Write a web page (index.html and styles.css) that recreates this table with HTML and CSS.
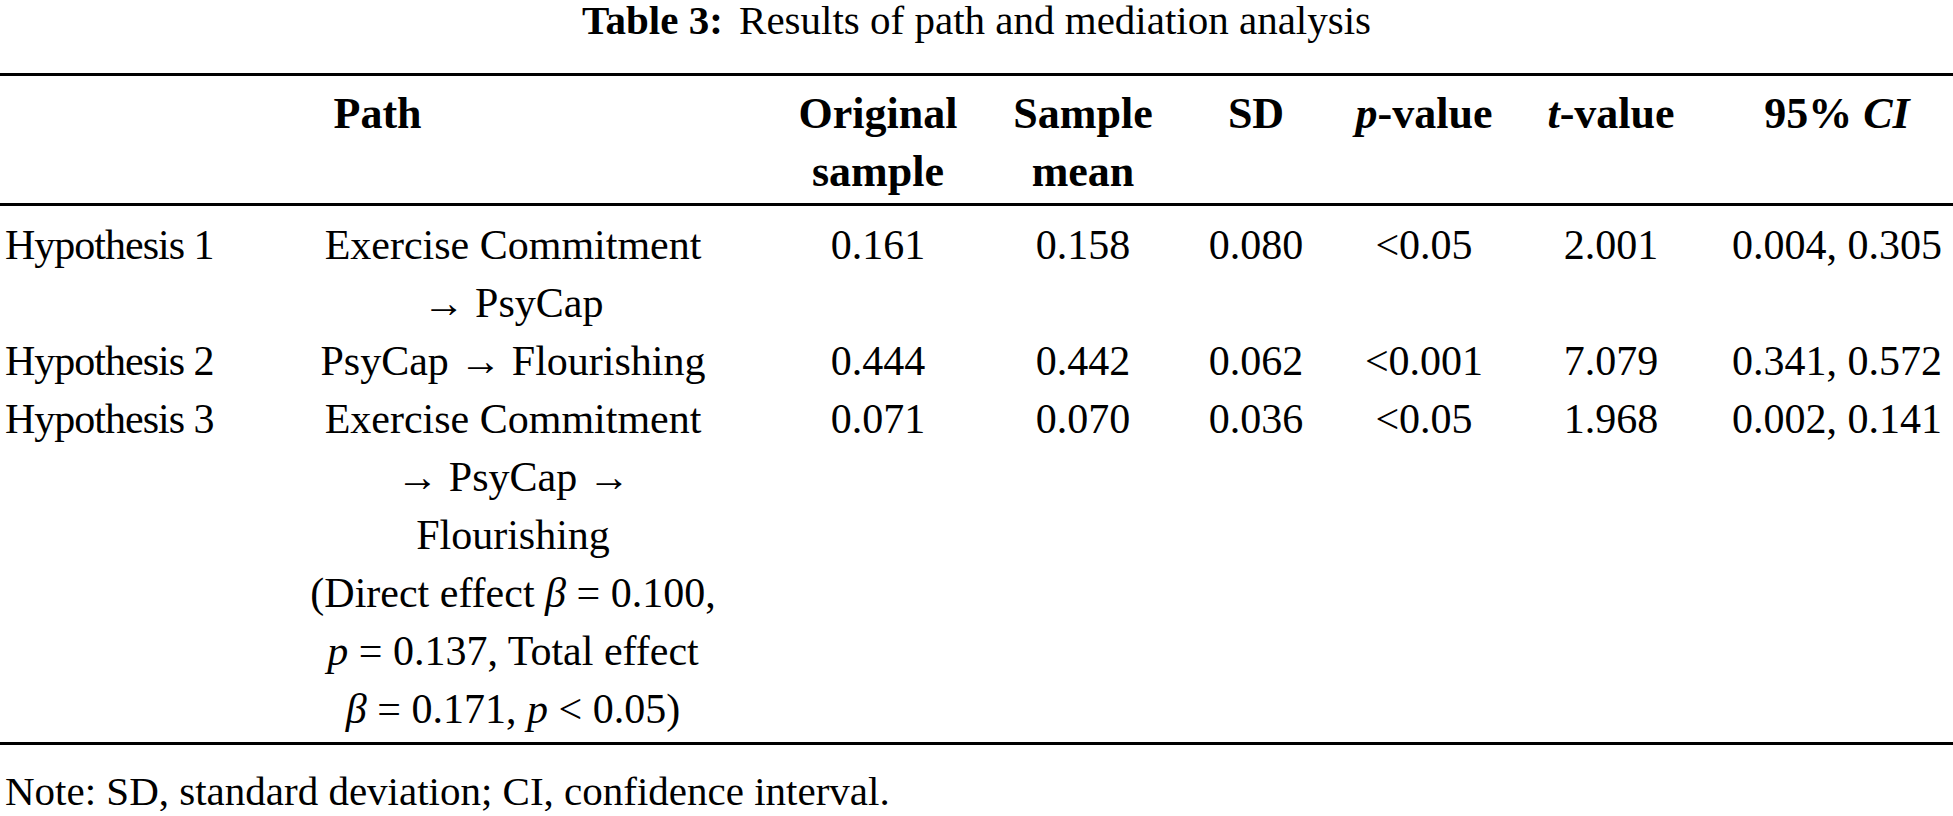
FILE: index.html
```html
<!DOCTYPE html>
<html lang="en">
<head>
<meta charset="utf-8">
<title>Table 3: Results of path and mediation analysis</title>
<link rel="stylesheet" href="styles.css">
</head>
<body>
<div class="doc">
  <p class="caption"><b class="label">Table 3:</b> Results of path and mediation analysis</p>
  <table class="results">
    <colgroup>
      <col class="c-hyp"><col class="c-path"><col class="c-orig"><col class="c-mean"><col class="c-sd"><col class="c-p"><col class="c-t"><col class="c-ci">
    </colgroup>
    <thead>
      <tr>
        <th colspan="2">Path</th>
        <th>Original<br>sample</th>
        <th>Sample<br>mean</th>
        <th>SD</th>
        <th><i>p</i>-value</th>
        <th><i>t</i>-value</th>
        <th>95% <i>CI</i></th>
      </tr>
    </thead>
    <tbody>
      <tr>
        <td class="hyp">Hypothesis 1</td>
        <td>Exercise Commitment<br>→ PsyCap</td>
        <td>0.161</td>
        <td>0.158</td>
        <td>0.080</td>
        <td>&lt;0.05</td>
        <td>2.001</td>
        <td>0.004, 0.305</td>
      </tr>
      <tr>
        <td class="hyp">Hypothesis 2</td>
        <td>PsyCap → Flourishing</td>
        <td>0.444</td>
        <td>0.442</td>
        <td>0.062</td>
        <td>&lt;0.001</td>
        <td>7.079</td>
        <td>0.341, 0.572</td>
      </tr>
      <tr>
        <td class="hyp">Hypothesis 3</td>
        <td>Exercise Commitment<br>→ PsyCap →<br>Flourishing<br>(Direct effect <i>β</i> = 0.100,<br><i>p</i> = 0.137, Total effect<br><i>β</i> = 0.171, <i>p</i> &lt; 0.05)</td>
        <td>0.071</td>
        <td>0.070</td>
        <td>0.036</td>
        <td>&lt;0.05</td>
        <td>1.968</td>
        <td>0.002, 0.141</td>
      </tr>
    </tbody>
  </table>
  <p class="note">Note: SD, standard deviation; CI, confidence interval.</p>
</div>
</body>
</html>
```
FILE: styles.css
```css
html, body {
  margin: 0;
  padding: 0;
  background: #ffffff;
}

.doc {
  font-family: "Liberation Serif", "Times New Roman", serif;
  color: #000000;
  width: 1953px;
}

.caption {
  margin: 0 0 33px 0;
  font-size: 41px;
  line-height: 40px;
  text-align: center;
}

.caption .label {
  font-weight: bold;
  margin-right: 6px;
}

.results {
  width: 1953px;
  table-layout: fixed;
  border-collapse: separate;
  border-spacing: 0;
  border-top: 3px solid #000000;
  border-bottom: 3px solid #000000;
}

.c-hyp { width: 271px; }
.c-path { width: 484px; }
.c-orig { width: 246px; }
.c-mean { width: 164px; }
.c-sd { width: 182px; }
.c-p { width: 154px; }
.c-t { width: 220px; }
.c-ci { width: 232px; }

.results th {
  font-size: 44px;
  line-height: 57.5px;
  font-weight: bold;
  text-align: center;
  vertical-align: top;
  padding: 9px 0 3px 0;
  border-bottom: 3px solid #000000;
  white-space: nowrap;
}

.results td {
  font-size: 42px;
  line-height: 58px;
  text-align: center;
  vertical-align: top;
  padding: 0;
  white-space: nowrap;
}

.results tbody tr:first-child td {
  padding-top: 10px;
}

.results tbody tr:last-child td {
  padding-bottom: 4px;
}

.results td.hyp {
  text-align: left;
  padding-left: 5px;
  letter-spacing: -1px;
}

.note {
  margin: 26px 0 0 0;
  padding-left: 5px;
  font-size: 41px;
  line-height: 40px;
}
```
